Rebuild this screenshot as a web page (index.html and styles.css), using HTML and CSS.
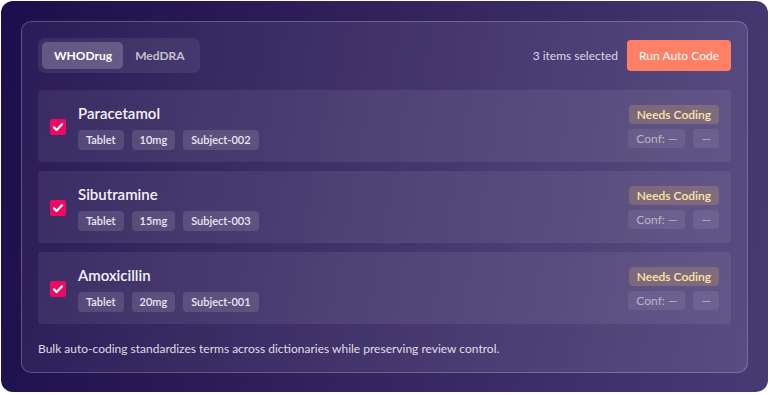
FILE: index.html
```html
<!DOCTYPE html>
<html lang="en">
<head>
    <meta charset="UTF-8">
    <meta name="viewport" content="width=device-width, initial-scale=1.0">
    <title>Bulk Auto Coding</title>
    <link rel="stylesheet" href="styles.css">
</head>
<body>
    <div class="stage">
        <div class="panel">
            <div class="toolbar">
                <div class="tabs">
                    <button class="tab active">WHODrug</button>
                    <button class="tab">MedDRA</button>
                </div>
                <div class="actions">
                    <span class="selected-count">3 items selected</span>
                    <button class="run-btn">Run Auto Code</button>
                </div>
            </div>

            <div class="rows">
                <div class="row">
                    <span class="check"><svg viewBox="0 0 16 16" width="16" height="16"><path d="M4 8.4l2.6 2.6L12 5.2" fill="none" stroke="#fff" stroke-width="2.2" stroke-linecap="round" stroke-linejoin="round"/></svg></span>
                    <div class="info">
                        <div class="term">Paracetamol</div>
                        <div class="chips">
                            <span class="chip">Tablet</span>
                            <span class="chip">10mg</span>
                            <span class="chip">Subject-002</span>
                        </div>
                    </div>
                    <div class="status">
                        <span class="badge">Needs Coding</span>
                        <div class="conf">
                            <span class="conf-chip">Conf: —</span>
                            <span class="conf-chip">—</span>
                        </div>
                    </div>
                </div>

                <div class="row">
                    <span class="check"><svg viewBox="0 0 16 16" width="16" height="16"><path d="M4 8.4l2.6 2.6L12 5.2" fill="none" stroke="#fff" stroke-width="2.2" stroke-linecap="round" stroke-linejoin="round"/></svg></span>
                    <div class="info">
                        <div class="term">Sibutramine</div>
                        <div class="chips">
                            <span class="chip">Tablet</span>
                            <span class="chip">15mg</span>
                            <span class="chip">Subject-003</span>
                        </div>
                    </div>
                    <div class="status">
                        <span class="badge">Needs Coding</span>
                        <div class="conf">
                            <span class="conf-chip">Conf: —</span>
                            <span class="conf-chip">—</span>
                        </div>
                    </div>
                </div>

                <div class="row">
                    <span class="check"><svg viewBox="0 0 16 16" width="16" height="16"><path d="M4 8.4l2.6 2.6L12 5.2" fill="none" stroke="#fff" stroke-width="2.2" stroke-linecap="round" stroke-linejoin="round"/></svg></span>
                    <div class="info">
                        <div class="term">Amoxicillin</div>
                        <div class="chips">
                            <span class="chip">Tablet</span>
                            <span class="chip">20mg</span>
                            <span class="chip">Subject-001</span>
                        </div>
                    </div>
                    <div class="status">
                        <span class="badge">Needs Coding</span>
                        <div class="conf">
                            <span class="conf-chip">Conf: —</span>
                            <span class="conf-chip">—</span>
                        </div>
                    </div>
                </div>
            </div>

            <p class="note">Bulk auto-coding standardizes terms across dictionaries while preserving review control.</p>
        </div>
    </div>
</body>
</html>
```

FILE: styles.css
```css
body {
    margin: 0;
    padding: 1px;
    background: #ffffff;
    font-family: 'Lato', 'Open Sans', sans-serif;
    color: #f1eef8;
}

.stage {
    width: 767px;
    height: 391px;
    box-sizing: border-box;
    padding: 20px;
    border-radius: 12px;
    background: linear-gradient(100deg, #1c0d4c 0%, #33245f 50%, #473a75 100%);
}

.panel {
    height: 352px;
    box-sizing: border-box;
    padding: 16px;
    border: 1px solid rgba(255, 255, 255, 0.22);
    border-radius: 10px;
    background: linear-gradient(100deg, rgba(255, 255, 255, 0.06), rgba(255, 255, 255, 0.1));
}

.toolbar {
    display: flex;
    justify-content: space-between;
    align-items: center;
    margin-bottom: 17px;
}

.tabs {
    display: flex;
    padding: 4px;
    border-radius: 7px;
    background: rgba(255, 255, 255, 0.08);
}

.tab {
    border: none;
    background: transparent;
    font-family: inherit;
    font-size: 12px;
    font-weight: 700;
    color: rgba(255, 255, 255, 0.7);
    padding: 0 11px 0 12px;
    height: 27px;
    border-radius: 5px;
}

.tab.active {
    background: rgba(255, 255, 255, 0.2);
    color: #ffffff;
}

.actions {
    display: flex;
    align-items: center;
    gap: 9px;
}

.selected-count {
    font-size: 12px;
    color: rgba(255, 255, 255, 0.82);
}

.run-btn {
    border: none;
    background: #ff8064;
    color: #ffffff;
    font-family: inherit;
    font-size: 12px;
    height: 31px;
    padding: 0 12px;
    border-radius: 4px;
}

.rows {
    display: flex;
    flex-direction: column;
    gap: 9px;
}

.row {
    display: flex;
    align-items: center;
    height: 72px;
    box-sizing: border-box;
    padding: 0 12px;
    border-radius: 4px;
    background: rgba(255, 255, 255, 0.07);
}

.check {
    width: 16px;
    height: 16px;
    border-radius: 2px;
    background: #ee0a62;
    margin-right: 12px;
    margin-top: 1px;
    flex-shrink: 0;
}

.check svg {
    display: block;
}

.info {
    flex: 1;
    padding-top: 2px;
}

.term {
    font-size: 15px;
    font-weight: 600;
    line-height: 18px;
    color: #f4f2fa;
    margin-bottom: 8px;
}

.chips {
    display: flex;
    gap: 8px;
}

.chip {
    font-size: 11px;
    font-weight: 600;
    line-height: 20px;
    padding: 0 8px;
    border-radius: 4px;
    background: rgba(255, 255, 255, 0.12);
    color: #ebe7f3;
}

.status {
    display: flex;
    flex-direction: column;
    align-items: flex-end;
    gap: 5px;
}

.badge {
    font-size: 12px;
    font-weight: 600;
    line-height: 19px;
    padding: 0 8px;
    border-radius: 4px;
    background: rgba(255, 200, 90, 0.2);
    color: #fbe9a4;
}

.conf {
    display: flex;
    gap: 8px;
}

.conf-chip {
    font-size: 12px;
    line-height: 19px;
    padding: 0 8px;
    border-radius: 4px;
    background: rgba(255, 255, 255, 0.08);
    color: rgba(255, 255, 255, 0.55);
}

.note {
    margin: 17px 0 0;
    font-size: 12px;
    color: rgba(255, 255, 255, 0.85);
}
```
